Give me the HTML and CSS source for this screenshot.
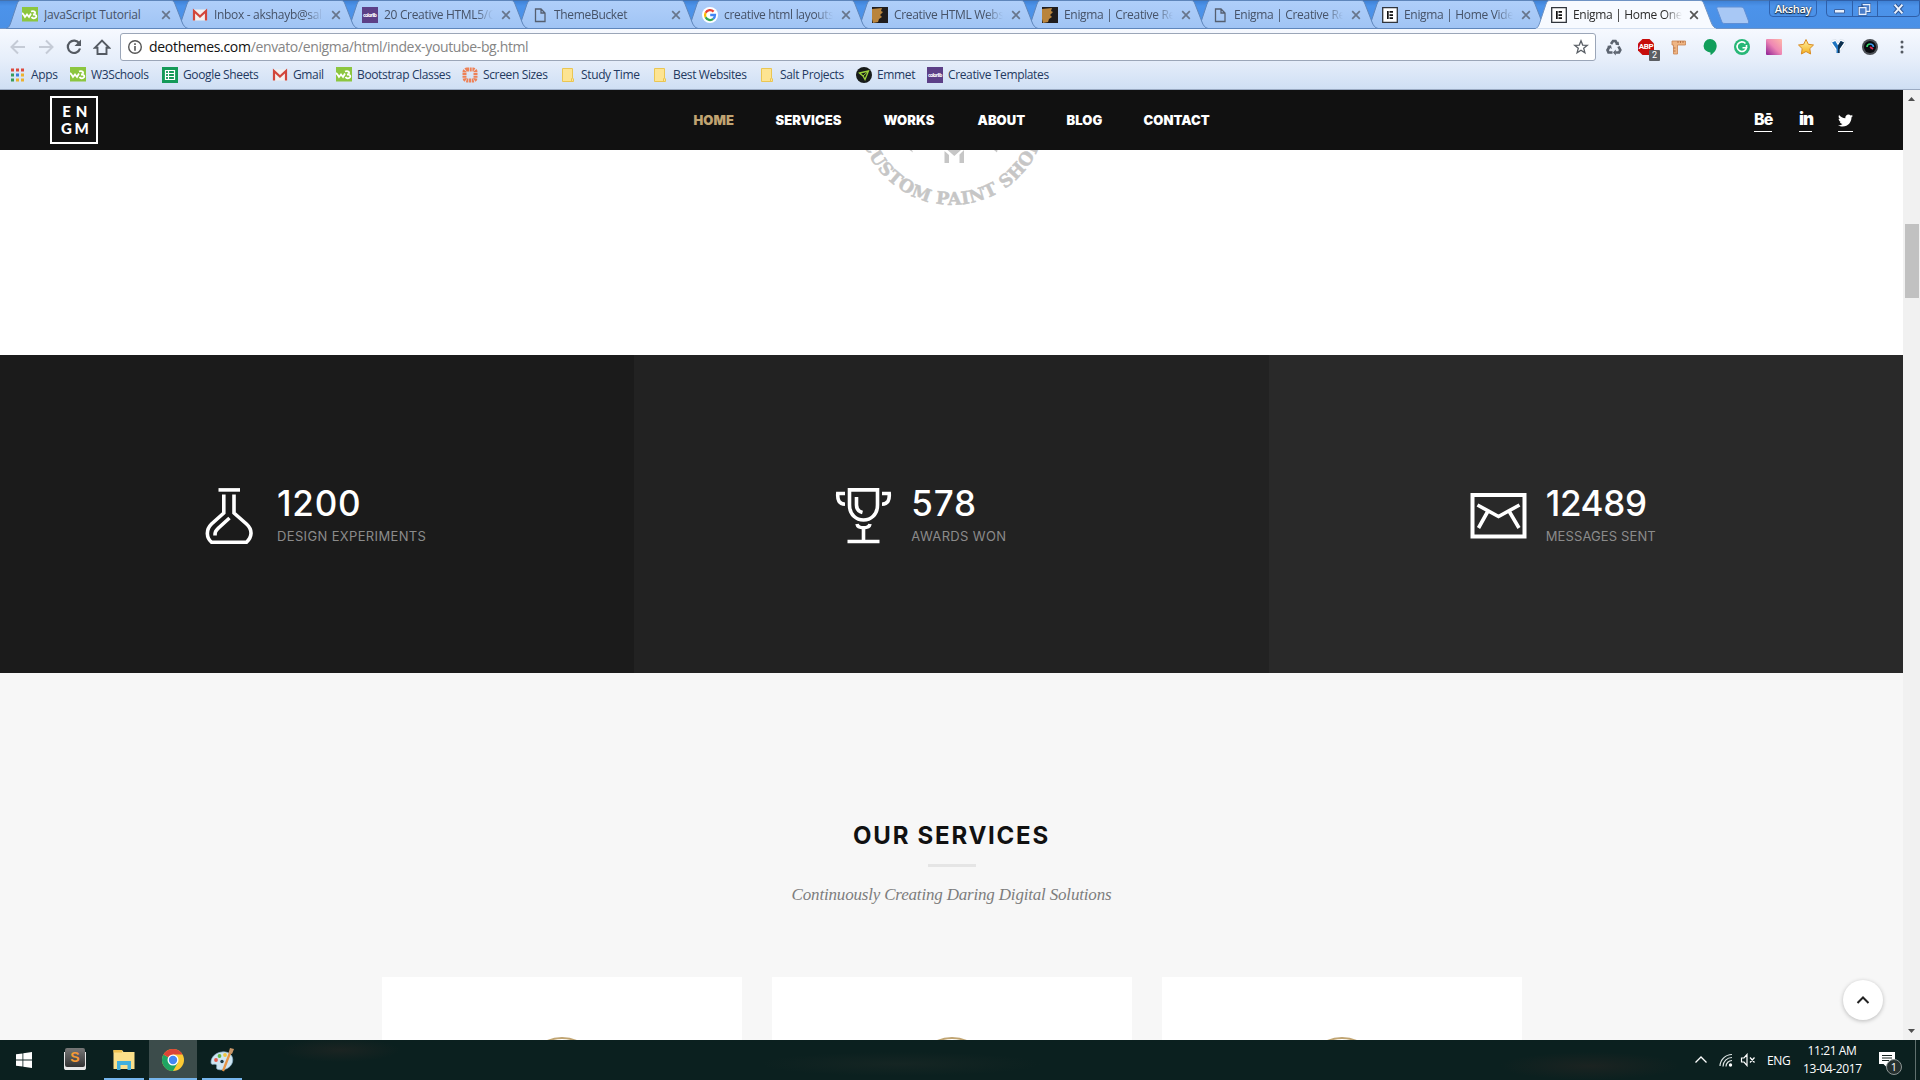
FILE: index.html
```html
<!DOCTYPE html>
<html lang="en">
<head>
<meta charset="utf-8">
<title>Enigma | Home One</title>
<link rel="stylesheet" href="styles.css">
</head>
<body>
<svg class="defs" width="0" height="0">
  <defs>
    <linearGradient id="tabfill" x1="0" y1="0" x2="0" y2="1"><stop offset="0" stop-color="#b0cffa"/><stop offset="1" stop-color="#a0c4f4"/></linearGradient>
    <linearGradient id="pinkfill" x1="1" y1="0" x2="0" y2="1"><stop offset="0" stop-color="#ffb9a8"/><stop offset=".5" stop-color="#ee86b4"/><stop offset="1" stop-color="#8d1f95"/></linearGradient>
    <linearGradient id="goldfill" x1="0" y1="0" x2="0" y2="1"><stop offset="0" stop-color="#fff3a8"/><stop offset="1" stop-color="#f3b01c"/></linearGradient>
    <linearGradient id="sublfill" x1="0" y1="0" x2="0" y2="1"><stop offset="0" stop-color="#777"/><stop offset="1" stop-color="#333"/></linearGradient>
  </defs>
  <symbol id="tab" viewBox="0 0 184 29"><path d="M0 28.5C3 28 4 25 5 22L11 4C12 1.500 13 .5 15 .5H165C167 .5 168 1.500 169 4L176 22C177 25 179 28 182 28.500Z" fill="url(#tabfill)" stroke="#5f86bb"/></symbol>
  <symbol id="tabon" viewBox="0 0 184 29"><path d="M0 29C3 28 4 25 5 22L11 4C12 1.500 13 .5 15 .5H165C167 .5 168 1.500 169 4L176 22C177 25 179 28 182 29Z" fill="#f7faff" stroke="#6f93c4"/><path d="M1 28.500H181V29H1Z" fill="#f4f8fe"/></symbol>
  <symbol id="x" viewBox="0 0 10 10"><path d="M1.200 1.200 8.800 8.800M8.800 1.200 1.200 8.800" stroke="currentColor" stroke-width="1.700" fill="none"/></symbol>
  <symbol id="w3" viewBox="0 0 16 16"><path d="M0 0H16V14.500H0Z" fill="#8cc63f"/><path d="M0 6 1.500 7.500 3 10 5 7.500 7 10 9 6.500M9 4.500C11 3.800 13.500 4.300 13 6.200 12.500 7.500 11 7.500 11 7.500 13 7.300 15 8.500 14 10.300 12.800 11.800 10.500 11.500 9.500 10" fill="none" stroke="#fff" stroke-width="1.800"/></symbol>
  <symbol id="gmail" viewBox="0 0 16 16"><path d="M1 2.500H15V13.500H1Z" fill="#f3f0ef"/><path d="M2 13.500V4L8 9.500 14 4V13.500" fill="none" stroke="#d2463a" stroke-width="2.200"/></symbol>
  <symbol id="colorlib" viewBox="0 0 16 16"><path d="M0 0H16V16H0Z" fill="#5c3f87"/><text x="8" y="9.800" textLength="14" class="clib">colorlib</text></symbol>
  <symbol id="page" viewBox="0 0 16 16"><path d="M3.500 2H9L13 6V14.500H3.500ZM9 2V6H13" fill="none" stroke="#555f70" stroke-width="1.300"/></symbol>
  <symbol id="face" viewBox="0 0 16 16"><path d="M0 0H16V16H0Z" fill="#1f1c1c"/><path d="M0 2 10 1 9 4 11 5 8 8 10 10 7 12 6 15 1 16 0 12Z" fill="#b9843c"/></symbol>
  <symbol id="elem" viewBox="0 0 16 16"><path d="M.7 .7H15.300V15.300H.7Z" fill="#fff" stroke="#30353c" stroke-width="1.300"/><path d="M5 4H6.700V12H5ZM7.500 4H11V5.700H7.500ZM7.500 7.200H11V8.900H7.500ZM7.500 10.300H11V12H7.500Z" fill="#111"/></symbol>
  <symbol id="google" viewBox="0 0 16 16"><circle cx="8" cy="8" r="8" fill="#fff"/><g fill="none" stroke-width="2.300"><path d="M11.600 4.600A5 5 0 0 0 3.600 5.700" stroke="#ea4335"/><path d="M3.600 5.700A5 5 0 0 0 3.600 10.300" stroke="#fbbc05"/><path d="M3.600 10.300A5 5 0 0 0 11.200 11.900" stroke="#34a853"/><path d="M11.200 11.900A5 5 0 0 0 13 8H8.200" stroke="#4285f4"/></g></symbol>
  <symbol id="folder" viewBox="0 0 14 16"><path d="M1.500 1.500H11.500V11L12.500 12V14.500H1.500Z" fill="#fde492" stroke="#eac653"/><path d="M10.500 14V12L11.500 10.500" fill="none" stroke="#eac653"/></symbol>
</svg>

<div class="browser">
  <div class="tabstrip">
    <div class="tabs">
      <div class="tab"><svg class="shape"><use href="#tab"/></svg><svg class="fav"><use href="#w3"/></svg><span class="title t1">JavaScript Tutorial</span><svg class="close"><use href="#x"/></svg></div>
      <div class="tab"><svg class="shape"><use href="#tab"/></svg><svg class="fav"><use href="#gmail"/></svg><span class="title">Inbox - akshayb@sal</span><svg class="close"><use href="#x"/></svg></div>
      <div class="tab"><svg class="shape"><use href="#tab"/></svg><svg class="fav"><use href="#colorlib"/></svg><span class="title">20 Creative HTML5/C</span><svg class="close"><use href="#x"/></svg></div>
      <div class="tab"><svg class="shape"><use href="#tab"/></svg><svg class="fav"><use href="#page"/></svg><span class="title">ThemeBucket</span><svg class="close"><use href="#x"/></svg></div>
      <div class="tab"><svg class="shape"><use href="#tab"/></svg><svg class="fav"><use href="#google"/></svg><span class="title">creative html layouts</span><svg class="close"><use href="#x"/></svg></div>
      <div class="tab"><svg class="shape"><use href="#tab"/></svg><svg class="fav"><use href="#face"/></svg><span class="title">Creative HTML Webs</span><svg class="close"><use href="#x"/></svg></div>
      <div class="tab"><svg class="shape"><use href="#tab"/></svg><svg class="fav"><use href="#face"/></svg><span class="title">Enigma | Creative Re</span><svg class="close"><use href="#x"/></svg></div>
      <div class="tab"><svg class="shape"><use href="#tab"/></svg><svg class="fav"><use href="#page"/></svg><span class="title">Enigma | Creative Re</span><svg class="close"><use href="#x"/></svg></div>
      <div class="tab"><svg class="shape"><use href="#tab"/></svg><svg class="fav"><use href="#elem"/></svg><span class="title">Enigma | Home Vide</span><svg class="close"><use href="#x"/></svg></div>
      <div class="tab active"><svg class="shape"><use href="#tabon"/></svg><svg class="fav"><use href="#elem"/></svg><span class="title">Enigma | Home One</span><svg class="close"><use href="#x"/></svg></div>
    </div>
    <svg class="newtab" viewBox="0 0 36 20"><path d="M3 1H26C28 1 28.500 2 29 3L33.500 15C34 17 33 17.500 32 17.500H10C8 17.500 7 17 6.500 15L2 3C1.500 2 2 1 3 1Z" fill="#a8c8f5" stroke="#5f8fd6"/></svg>
    <div class="user">Akshay</div>
    <div class="winctl">
      <svg viewBox="0 0 25 16"><path d="M7.500 8.500H17.500V12H7.500Z" fill="#e9f1fd" stroke="#3c64a4"/></svg>
      <svg viewBox="0 0 25 16"><path d="M10 3.500H17.500V10.500H10ZM6.500 6.500H13.500V13.500H6.500Z" fill="#dbe8fb" stroke="#2c5391" stroke-width="2.600"/><path d="M10 3.500H17.500V10.500H14M6.500 6.500H13.500V13.500H6.500Z" fill="#4a7dc9" stroke="#e9f1fd" stroke-width="1.300"/></svg>
      <svg viewBox="0 0 42 16"><path d="M17 3.500 25 12.500M25 3.500 17 12.500" stroke="#2f5796" stroke-width="4"/><path d="M17 3.500 25 12.500M25 3.500 17 12.500" stroke="#edf3fd" stroke-width="2"/></svg>
    </div>
  </div>

  <div class="toolbar">
    <div class="navbtns">
      <svg viewBox="0 0 18 18"><path d="M16 9H3M9 2.500 2.500 9 9 15.500" fill="none" stroke="#c5cbd6" stroke-width="2"/></svg>
      <svg viewBox="0 0 18 18"><path d="M2 9H15M9 2.500 15.500 9 9 15.500" fill="none" stroke="#c5cbd6" stroke-width="2"/></svg>
      <svg viewBox="0 0 18 18"><path d="M14.300 5.500A6.200 6.200 0 1 0 15 10.500" fill="none" stroke="#545a62" stroke-width="2.200"/><path d="M16 1.500V8H9.500Z" fill="#545a62"/></svg>
      <svg viewBox="0 0 18 18"><path d="M1.800 9.800 9 2.500 16.200 9.800H13.500V16H4.500V9.800Z" fill="none" stroke="#545a62" stroke-width="1.900"/></svg>
    </div>
    <div class="omnibox">
      <svg class="info" viewBox="0 0 16 16"><circle cx="8" cy="8" r="6.300" fill="none" stroke="#555" stroke-width="1.400"/><path d="M7.200 7H8.800V11.700H7.200ZM7.200 4.300H8.800V5.900H7.200Z" fill="#555"/></svg>
      <span class="url"><b>deothemes.com</b>/envato/enigma/html/index-youtube-bg.html</span>
      <svg class="star" viewBox="0 0 16 16"><path d="M8 1.800 9.700 6.100 14.300 6.300 10.700 9.200 11.900 13.700 8 11.200 4.100 13.700 5.300 9.200 1.700 6.300 6.300 6.100Z" fill="none" stroke="#5a5f66" stroke-width="1.300"/></svg>
    </div>
    <div class="exts">
      <svg viewBox="0 0 18 18"><g fill="none" stroke="#5c6470" stroke-width="2.700"><path d="M6 6 8 3H10.500L12.300 6"/><path d="M13.500 8.500 15.300 12 14 14.500H10.500"/><path d="M7.500 14.500H3.500L2.500 12 4.500 8.500"/></g><path d="M10.300 6.800 14.200 7.200 13.500 3.500ZM10.800 11.500V17.500L8 14.500ZM2 8 6 7.200 6.800 11Z" fill="#5c6470"/></svg>
      <div class="abp"><svg viewBox="0 0 18 18"><path d="M5.500 1H12.500L17 5.500V12.500L12.500 17H5.500L1 12.500V5.500Z" fill="#c70d0b"/></svg><span class="abptext">ABP</span><span class="count">2</span></div>
      <svg viewBox="0 0 18 18"><path d="M3 3H16.500V7H8.500V16H4.500V7H3Z" fill="#efb584" stroke="#c88352" stroke-width=".8"/><path d="M9 3V5M11.500 3V5M14 3V5M4.500 10H6.500M4.500 13H6.500" stroke="#a86335" stroke-width=".8"/></svg>
      <svg viewBox="0 0 18 18"><path d="M9 1A6.700 6.700 0 0 1 15.700 7.700C15.700 12 12.500 15.500 9.500 17V14.400A6.700 6.700 0 1 1 9 1Z" fill="#119e5b"/></svg>
      <svg viewBox="0 0 18 18"><circle cx="9" cy="9" r="8" fill="#27b777"/><path d="M12.500 5.500A4.800 4.800 0 1 0 13.600 9.700H9.500M13.500 7V9.700" fill="none" stroke="#fff" stroke-width="1.600"/></svg>
      <svg viewBox="0 0 18 18"><rect x="1" y="1" width="16" height="16" rx="1" fill="url(#pinkfill)"/></svg>
      <svg viewBox="0 0 18 18"><path d="M9 1.500 11.300 6.300 16.500 7 12.800 10.600 13.600 16 9 13.500 4.400 16 5.200 10.600 1.500 7 6.700 6.300Z" fill="url(#goldfill)" stroke="#d98c24" stroke-linejoin="round"/></svg>
      <svg viewBox="0 0 18 18"><path d="M3.500 2 7 1.500 9 5 11 1.500 14.500 2 16.500 5.500 11 13.500 9 16.500 7 13.500 1.500 5.500Z" fill="#fff" stroke="#dfe5ef"/><path d="M3 4.500 6.300 3 9 7.500 11.700 3 15 4.500 10.500 11V15H7.500V11Z" fill="#1f74c0"/><path d="M9 7.500 11.700 3 15 4.500 10.500 11V15H9Z" fill="#10304d"/></svg>
      <svg viewBox="0 0 18 18"><circle cx="9" cy="9" r="8" fill="#4b4f55"/><circle cx="9" cy="9" r="6" fill="#090b10"/><path d="M6 9A3 3 0 0 1 9 6" fill="none" stroke="#36d56b" stroke-width="1.700"/><path d="M9 6A3.500 3.500 0 0 1 12.500 9" fill="none" stroke="#3798e8" stroke-width="1.700"/><path d="M9 9 12 11" stroke="#dc2857" stroke-width="1.700"/></svg>
      <svg viewBox="0 0 18 18"><g fill="#545a62"><circle cx="9" cy="4" r="1.500"/><circle cx="9" cy="9" r="1.500"/><circle cx="9" cy="14" r="1.500"/></g></svg>
    </div>
  </div>

  <div class="bookmarks">
    <span class="bm"><svg viewBox="0 0 16 16"><path d="M1 1.500H4V4.500H1ZM6 1.500H9V4.500H6ZM11 1.500H14V4.500H11Z" fill="#dc4a3e"/><path d="M1 6.500H4V9.500H1Z" fill="#3a9c5a"/><path d="M6 6.500H9V9.500H6Z" fill="#3d7edb"/><path d="M11 6.500H14V9.500H11ZM6 11.500H9V14.500H6ZM11 11.500H14V14.500H11Z" fill="#ecb22e"/><path d="M1 11.500H4V14.500H1Z" fill="#3a9c5a"/></svg>Apps</span>
    <span class="bm"><svg><use href="#w3"/></svg>W3Schools</span>
    <span class="bm"><svg viewBox="0 0 16 16"><path d="M0 0H16V16H0Z" fill="#149a58"/><path d="M3.500 3.500H12.500V12.500H3.500ZM3.500 6.500H12.500M3.500 9.500H12.500M6.500 3.500V12.500" fill="none" stroke="#fff" stroke-width="1.200"/></svg>Google Sheets</span>
    <span class="bm"><svg><use href="#gmail"/></svg>Gmail</span>
    <span class="bm"><svg><use href="#w3"/></svg>Bootstrap Classes</span>
    <span class="bm"><svg viewBox="0 0 16 16"><rect x="2.500" y="2.500" width="11" height="11" rx="2.500" fill="none" stroke="#ee8156" stroke-width="4" stroke-dasharray="2 .7"/></svg>Screen Sizes</span>
    <span class="bm"><svg><use href="#folder"/></svg>Study Time</span>
    <span class="bm"><svg><use href="#folder"/></svg>Best Websites</span>
    <span class="bm"><svg><use href="#folder"/></svg>Salt Projects</span>
    <span class="bm"><svg viewBox="0 0 16 16"><circle cx="8" cy="8" r="8" fill="#171b1a"/><path d="M3.500 6 12.500 4 9 12.500 7 9Z" fill="none" stroke="#9bd13a" stroke-width="1.300"/><path d="M7 9 12.500 4" stroke="#9bd13a"/></svg>Emmet</span>
    <span class="bm"><svg><use href="#colorlib"/></svg>Creative Templates</span>
  </div>
</div>

<div class="viewport">
  <div class="page">
    <header class="header">
      <div class="logo"><span>E</span><span>N</span><span>G</span><span>M</span></div>
      <nav class="nav"><a class="current">HOME</a><a>SERVICES</a><a>WORKS</a><a>ABOUT</a><a>BLOG</a><a>CONTACT</a></nav>
      <div class="social">
        <a class="be">Bē</a><a class="in">in</a>
        <a class="tw"><svg viewBox="0 40 512 432"><path fill="#fff" d="M459.370 151.716c.325 4.548.325 9.097.325 13.645 0 138.720-105.583 298.558-298.558 298.558-59.452 0-114.680-17.219-161.137-47.106 8.447.974 16.568 1.299 25.340 1.299 49.055 0 94.213-16.568 130.274-44.832-46.132-.975-84.792-31.188-98.112-72.772 6.498.974 12.995 1.624 19.818 1.624 9.421 0 18.843-1.300 27.614-3.573-48.081-9.747-84.143-51.980-84.143-102.985v-1.299c13.969 7.797 30.214 12.670 47.431 13.319-28.264-18.843-46.781-51.005-46.781-87.391 0-19.492 5.197-37.360 14.294-52.954 51.655 63.675 129.300 105.258 216.365 109.807-1.624-7.797-2.599-15.918-2.599-24.040 0-57.828 46.782-104.934 104.934-104.934 30.213 0 57.502 12.670 76.670 33.137 23.715-4.548 46.456-13.320 66.599-25.340-7.798 24.366-24.366 44.833-46.132 57.827 21.117-2.273 41.584-8.122 60.426-16.243-14.292 20.791-32.161 39.308-52.628 54.253z"/></svg></a>
      </div>
    </header>
    <section class="clients">
      <svg class="stamp" viewBox="851 150 200 60">
        <path id="arc" d="M862 142A94.400 94.400 0 0 0 1043.300 130.200" fill="none"/>
        <text fill="#c6c6c6"><textPath href="#arc" textLength="231">CUSTOM PAINT SHOP</textPath></text>
        <path d="M943.500 151 948 155V163H943.500ZM958.500 154.500 963 150V163H958.500ZM946.500 150H960L953.300 156ZM908.500 150H911L912 152.500ZM993 150H996.500L996 152.500Z" fill="#c6c6c6"/>
      </svg>
    </section>
    <section class="stats">
      <div class="stat s1">
        <svg viewBox="0 0 58 58"><g fill="none" stroke="#fff" stroke-width="3.600"><path d="M18.500 2.900H40"/><path d="M23.800 7.500V26L11.500 37C5.500 43 6.500 51 11.500 55.200H46.500C52 50 53 43 46.500 37L34 26V7.500"/><path d="M29.500 31 18.500 41C15.500 44 15 45 15 48.500"/></g></svg>
        <div><strong>1200</strong><em>DESIGN EXPERIMENTS</em></div>
      </div>
      <div class="stat s2">
        <svg viewBox="0 0 58 58"><g fill="none" stroke="#fff" stroke-width="3.600"><path d="M15.500 2.900H43.500V18C43.500 38 15.500 38 15.500 18Z"/><path d="M11 6.500H3.800C3.300 13 5 17 11 17.200M48 6.500H55.200C55.700 13 54 17 48 17.200M22.500 10V18C22.500 22 24.500 24.500 28.500 25.500"/><path d="M23 37C24 42 35 42 36 37M29.500 41V54M13.500 54.500H45.500"/></g></svg>
        <div><strong>578</strong><em>AWARDS WON</em></div>
      </div>
      <div class="stat s3">
        <svg viewBox="0 0 58 58"><g fill="none" stroke="#fff" stroke-width="4"><path d="M3.500 8H55.500V49.500H3.500Z"/><path d="M8.500 18 29.500 29.500 50.500 18M19 24 9.500 41M40 24 50 41" stroke-width="3.600"/></g></svg>
        <div><strong>12489</strong><em>MESSAGES SENT</em></div>
      </div>
    </section>
    <section class="services">
      <h2>OUR SERVICES</h2>
      <div class="rule"></div>
      <p>Continuously Creating Daring Digital Solutions</p>
      <div class="cards"><div class="card"><i></i></div><div class="card"><i></i></div><div class="card"><i></i></div></div>
    </section>
    <a class="totop"><svg viewBox="0 0 14 10"><path d="M1.500 8 7 2.500 12.500 8" fill="none" stroke="#222" stroke-width="2"/></svg></a>
  </div>
  <div class="scrollbar">
    <svg viewBox="0 0 17 17"><path d="M5 11 8.500 7 12 11Z" fill="#505050"/></svg>
    <div class="thumb"></div>
    <svg viewBox="0 0 17 17"><path d="M5 6 8.500 10 12 6Z" fill="#505050"/></svg>
  </div>
</div>

<div class="taskbar">
  <div class="task start"><svg viewBox="0 0 16 16"><path d="M0 2.300 6.500 1.400V7.500H0ZM7.300 1.300 16 0V7.500H7.300ZM0 8.400H6.500V14.600L0 13.700ZM7.300 8.400H16V16L7.300 14.700Z" fill="#fff"/></svg></div>
  <div class="task"><svg viewBox="0 0 24 24"><path d="M1 4H23V20C23 21.500 22 22 21 22H3C2 22 1 21.500 1 20Z" fill="#e8e8e8"/><rect x="2" y="0" width="20" height="19" rx="2" fill="url(#sublfill)"/><text x="12" y="14" class="subl">S</text></svg></div>
  <div class="task running"><svg viewBox="0 0 24 24"><path d="M1.500 2H10L11.500 4H22.500V21H1.500Z" fill="#fbe08a"/><path d="M1.500 2H10V4.500H1.500Z" fill="#edc151"/><path d="M5 13H19V22H15.500V17H8.500V22H5Z" fill="#42b0dd"/></svg></div>
  <div class="task running focus"><svg viewBox="0 0 24 24"><circle cx="12" cy="12" r="11" fill="#fbc934"/><path d="M12 12 2.470 6.500A11 11 0 0 0 12 23L16.800 14.800Z" fill="#1fa463"/><path d="M12 12 2.470 6.500A11 11 0 0 1 21.530 6.500H12Z" fill="#dc4437"/><circle cx="12" cy="12" r="5.500" fill="#fff"/><circle cx="12" cy="12" r="4.200" fill="#4587f3"/></svg></div>
  <div class="task running"><svg viewBox="0 0 24 24"><path d="M12 4C19 3 24 8 22.500 14 21 20 14 23 8 21.500 5 20.500 8 17.500 6 16.500 4 15.500 1 18 1 14 1 9 6 4.500 12 4Z" fill="#cfe6f3" stroke="#87adc6" stroke-width=".7"/><circle cx="6" cy="12" r="1.900" fill="#e35b4b"/><circle cx="9.500" cy="8" r="1.900" fill="#63b84a"/><circle cx="15" cy="7" r="1.900" fill="#f0c53f"/><circle cx="12" cy="13.500" r="1.700" fill="#1c3944"/><path d="M13 23 20 5" stroke="#e69445" stroke-width="2.300"/><path d="M18.500 5 20 0 24 1 22 6Z" fill="#c99668"/></svg></div>
  <div class="tray">
    <svg class="up" viewBox="0 0 14 14"><path d="M1.500 9.500 7 4 12.500 9.500" fill="none" stroke="#fff" stroke-width="1.300"/></svg>
    <svg class="wifi" viewBox="0 0 14 14"><g fill="none" stroke="#dfe6e5" stroke-width="1.200"><path d="M1 13A12 12 0 0 1 13 1.500M4 13.500A9 9 0 0 1 13 4.500M7 13.500A6 6 0 0 1 13 7.500"/></g><circle cx="11.500" cy="12" r="1.700" fill="#fff"/></svg>
    <svg class="vol" viewBox="0 0 16 14"><path d="M1.500 5H4L7 1.500V12.500L4 9H1.500ZM10 4.500 14.500 9.500M14.500 4.500 10 9.500" fill="none" stroke="#fff" stroke-width="1.200"/></svg>
    <span class="lang">ENG</span>
    <div class="clock"><span>11:21 AM</span><span>13-04-2017</span></div>
    <div class="notif"><svg viewBox="0 0 16 16"><path d="M0 0H16V12H8V15.500L4.500 12H0Z" fill="#fff"/><path d="M3 3.500H13M3 6H13M3 8.500H10" stroke="#14221f"/></svg><span>1</span></div>
    <div class="peek"></div>
  </div>
</div>
</body>
</html>
```
FILE: styles.css
```css
* { box-sizing: border-box; }
body { margin: 0; width: 1920px; height: 1080px; overflow: hidden; display: flex; flex-direction: column; font-family: "Open Sans", "Noto Sans", sans-serif; font-size: 12px; background: #fff; }
svg { display: block; flex: none; }
.defs { position: absolute; }

/* Browser chrome */
.browser { height: 90px; flex: none; border-bottom: 1px solid #9aaac2; background: linear-gradient(#f6f9ff 29px, #e6eefa 60px, #cfdff4 89px); }
.tabstrip { height: 29px; display: flex; padding-left: 6px; background: linear-gradient(#3f82d6, #4c93ea 5px, #4a90e6); border-top: 1px solid #4472ae; border-bottom: 1px solid #6f93c4; }
.tabs { display: flex; flex: none; margin-top: -1px; isolation: isolate; }
.tab { position: relative; display: flex; align-items: center; width: 184px; height: 29px; margin-right: -14px; padding: 0 0 0 16px; color: #465267; }
.tab:nth-child(1) { z-index: 10; } .tab:nth-child(2) { z-index: 9; } .tab:nth-child(3) { z-index: 8; } .tab:nth-child(4) { z-index: 7; } .tab:nth-child(5) { z-index: 6; } .tab:nth-child(6) { z-index: 5; } .tab:nth-child(7) { z-index: 4; } .tab:nth-child(8) { z-index: 3; } .tab:nth-child(9) { z-index: 2; }
.tab.active { z-index: 12; margin-left: -1px; color: #2b2b2b; }
.shape { position: absolute; left: 0; top: 0; width: 184px; height: 29px; z-index: -1; }
.fav { width: 16px; height: 16px; margin-top: 1px; }
.title { width: 109px; margin-left: 6px; white-space: nowrap; overflow: hidden; letter-spacing: -.32px; -webkit-mask-image: linear-gradient(90deg, #000 84%, transparent); }
.t1 { -webkit-mask-image: none; letter-spacing: -.22px; }
.close { width: 10px; height: 10px; margin: 1px 0 0 8px; color: #68768c; }
.active .close { margin-left: 7px; color: #555; }
.clib { font: 700 5px "Open Sans", sans-serif; fill: #fff; text-anchor: middle; }
.newtab { width: 36px; height: 20px; margin: 5px 0 0 10px; }
.user { width: 52px; height: 17px; margin: -1px 0 0 18px; border: 1px solid #2f63b0; border-radius: 0 0 4px 4px; color: #fff; font-size: 11px; font-weight: 600; line-height: 16px; text-align: center; text-shadow: 0 0 2px #123, 0 1px 1px #123; letter-spacing: -.3px; }
.winctl { display: flex; height: 17px; margin: -1px 0 0 9px; border: 1px solid #2f5fa8; border-radius: 0 0 4px 4px; }
.winctl svg { width: 25px; height: 16px; }
.winctl svg:last-child { width: 42px; }
.winctl svg + svg { border-left: 1px solid #2f5fa8; }

.toolbar { display: flex; align-items: center; height: 36px; }
.navbtns { display: flex; gap: 10px; width: 120px; padding-left: 9px; }
.navbtns svg, .exts svg { width: 18px; height: 18px; }
.omnibox { display: flex; align-items: center; width: 1476px; height: 28px; border: 1px solid #9ba6b8; border-radius: 3px; background: #fff; padding: 0 6px; }
.info, .star { width: 16px; height: 16px; }
.url { flex: 1; margin-left: 6px; font-size: 14px; line-height: 20px; letter-spacing: -.36px; color: #858585; }
.url b { font-weight: 400; color: #111; letter-spacing: -.3px; }
.exts { display: flex; gap: 14px; margin-left: 9px; }
.abp { position: relative; }
.abptext { position: absolute; left: 0; top: 3px; width: 18px; text-align: center; font: 700 8px/11px "Roboto", sans-serif; color: #fff; letter-spacing: -.3px; }
.count { position: absolute; left: 12px; top: 12px; width: 11px; height: 11px; border-radius: 1px; background: #5b5e63; color: #fff; font: 9px/11px "Roboto", sans-serif; text-align: center; }

.bookmarks { display: grid; grid-template-columns: 60px 92px 110px 64px 126px 98px 92px 107px 97px 71px 121px; align-items: center; height: 20px; padding: 0 0 0 10px; color: #23395f; letter-spacing: -.36px; }
.bm { display: flex; align-items: center; gap: 5px; white-space: nowrap; line-height: 18px; }
.bm svg { width: 16px; height: 16px; }

/* Site */
.viewport { display: flex; height: 950px; flex: none; }
.page { position: relative; width: 1903px; height: 950px; overflow: hidden; font-family: "Inter", sans-serif; }
.header { display: flex; align-items: center; justify-content: space-between; height: 60px; padding: 0 50px; background: #111; }
.logo { display: grid; grid-template-columns: 14px 14px; grid-template-rows: 17px 17px; column-gap: 1px; align-content: center; justify-content: center; width: 48px; height: 48px; border: 2px solid #fff; color: #fff; font: 900 15px/16px "Lato", sans-serif; text-align: center; }
.nav { display: grid; grid-template-columns: 42px 68px 54px 49px 37px 66px; column-gap: 40px; margin-left: 51px; font-size: 13px; line-height: 16px; font-weight: 900; letter-spacing: .05px; color: #fff; }
.nav a { white-space: nowrap; }
.nav .current { color: #c0a472; }
.social { display: flex; margin-top: 2px; color: #fff; }
.social a { height: 22px; border-bottom: 1px solid #fff; }
.be { width: 18px; margin-right: 27px; font: 800 16px/19px "Inter", sans-serif; letter-spacing: -1px; }
.in { width: 13px; margin-right: 26px; font: 900 17px/19px "Inter", sans-serif; letter-spacing: -1px; }
.tw { width: 15px; padding-top: 4px; }
.tw svg { width: 15px; height: 13px; }

.clients { height: 205px; background: #fff; }
.stamp { width: 200px; height: 60px; margin: 0 auto; overflow: hidden; }
.stamp text { font: 700 17.5px "DejaVu Serif", serif; stroke: #c6c6c6; stroke-width: .5px; }

.stats { display: grid; grid-template-columns: repeat(3, 1fr); height: 318px; }
.stat { display: flex; gap: 19px; padding: 132px 0 0 200px; }
.s1 { background: #1b1b1b; } .s2 { background: #222; } .s3 { background: #292929; }
.stat svg { width: 58px; height: 58px; }
.stat strong { display: block; margin-top: -1px; font-size: 35px; line-height: 35px; font-weight: 500; color: #fff; letter-spacing: .8px; }
.stat em { display: block; margin-top: 7px; font-size: 13px; line-height: 16px; font-style: normal; color: #8b8b8b; white-space: nowrap; letter-spacing: .35px; }
.s3 strong { letter-spacing: -.3px; }
.s3 em { letter-spacing: .12px; }

.services { height: 367px; background: #f7f7f7; padding-top: 148px; text-align: center; }
.services h2 { margin: 0; font-size: 24px; line-height: 29px; font-weight: 700; letter-spacing: 1.750px; color: #111; }
.rule { width: 48px; height: 3px; margin: 14px auto 17px; background: #e5e5e5; }
.services p { margin: 0; font: italic 17px/22px "Liberation Serif", serif; letter-spacing: -.18px; color: #7d7d7d; }
.cards { display: grid; grid-template-columns: repeat(3, 360px); gap: 30px; justify-content: center; margin-top: 71px; }
.card { height: 300px; padding-top: 60px; background: #fff; }
.card i { display: block; width: 74px; height: 74px; margin: 0 auto; border: 2px solid #c0a472; border-radius: 50%; }
.totop { position: absolute; right: 20px; bottom: 20px; display: flex; align-items: center; justify-content: center; width: 40px; height: 40px; padding-bottom: 1px; border-radius: 50%; background: #fff; box-shadow: 0 1px 4px rgba(0, 0, 0, .25); }
.totop svg { width: 14px; height: 10px; }

.scrollbar { display: flex; flex-direction: column; width: 17px; background: #f1f1f1; }
.scrollbar svg { width: 17px; height: 17px; }
.thumb { width: 14px; height: 74px; margin: 117px 0 725px 2px; background: #c1c1c1; }

/* Taskbar */
.taskbar { display: flex; height: 40px; flex: none; color: #fff; background: radial-gradient(ellipse 60px 12px at 340px 10px, #1b2422, transparent), radial-gradient(ellipse 90px 14px at 1590px 26px, #1b2321, transparent), radial-gradient(ellipse 140px 12px at 900px 24px, #152523, transparent), #0b201f; }
.task { display: flex; align-items: center; justify-content: center; width: 40px; margin-right: 9px; }
.task svg { width: 24px; height: 24px; }
.task:nth-child(2) { margin: 0 8px 0 7px; }
.start { width: 48px; margin: 0; }
.start svg { width: 16px; height: 16px; }
.task.running { border-bottom: 2px solid #76b5ec; margin: 0 5px 0 1px; padding-top: 1px; }
.task.focus { width: 48px; margin: 0 4px 0 0; background: #3c4c4b; }
.subl { font: 700 14px "Liberation Sans", sans-serif; fill: #f59a33; text-anchor: middle; }
.tray { display: flex; align-items: center; margin-left: auto; }
.up { width: 14px; height: 14px; margin-right: 11px; }
.wifi { width: 14px; height: 14px; margin-right: 7px; }
.vol { width: 16px; height: 14px; margin-right: 11px; }
.lang { width: 24px; margin-right: 12px; letter-spacing: -.4px; }
.clock { display: flex; flex-direction: column; width: 58px; margin-right: 18px; line-height: 18px; text-align: center; letter-spacing: -.4px; white-space: nowrap; }
.notif { position: relative; width: 16px; margin-right: 20px; }
.notif svg { width: 16px; height: 16px; }
.notif span { position: absolute; left: 7px; top: 7px; width: 16px; height: 16px; border: 1px solid #8d9695; border-radius: 50%; background: #26302f; font-size: 11px; line-height: 14px; text-align: center; }
.peek { width: 5px; height: 40px; border-left: 1px solid #60706e; }
```
